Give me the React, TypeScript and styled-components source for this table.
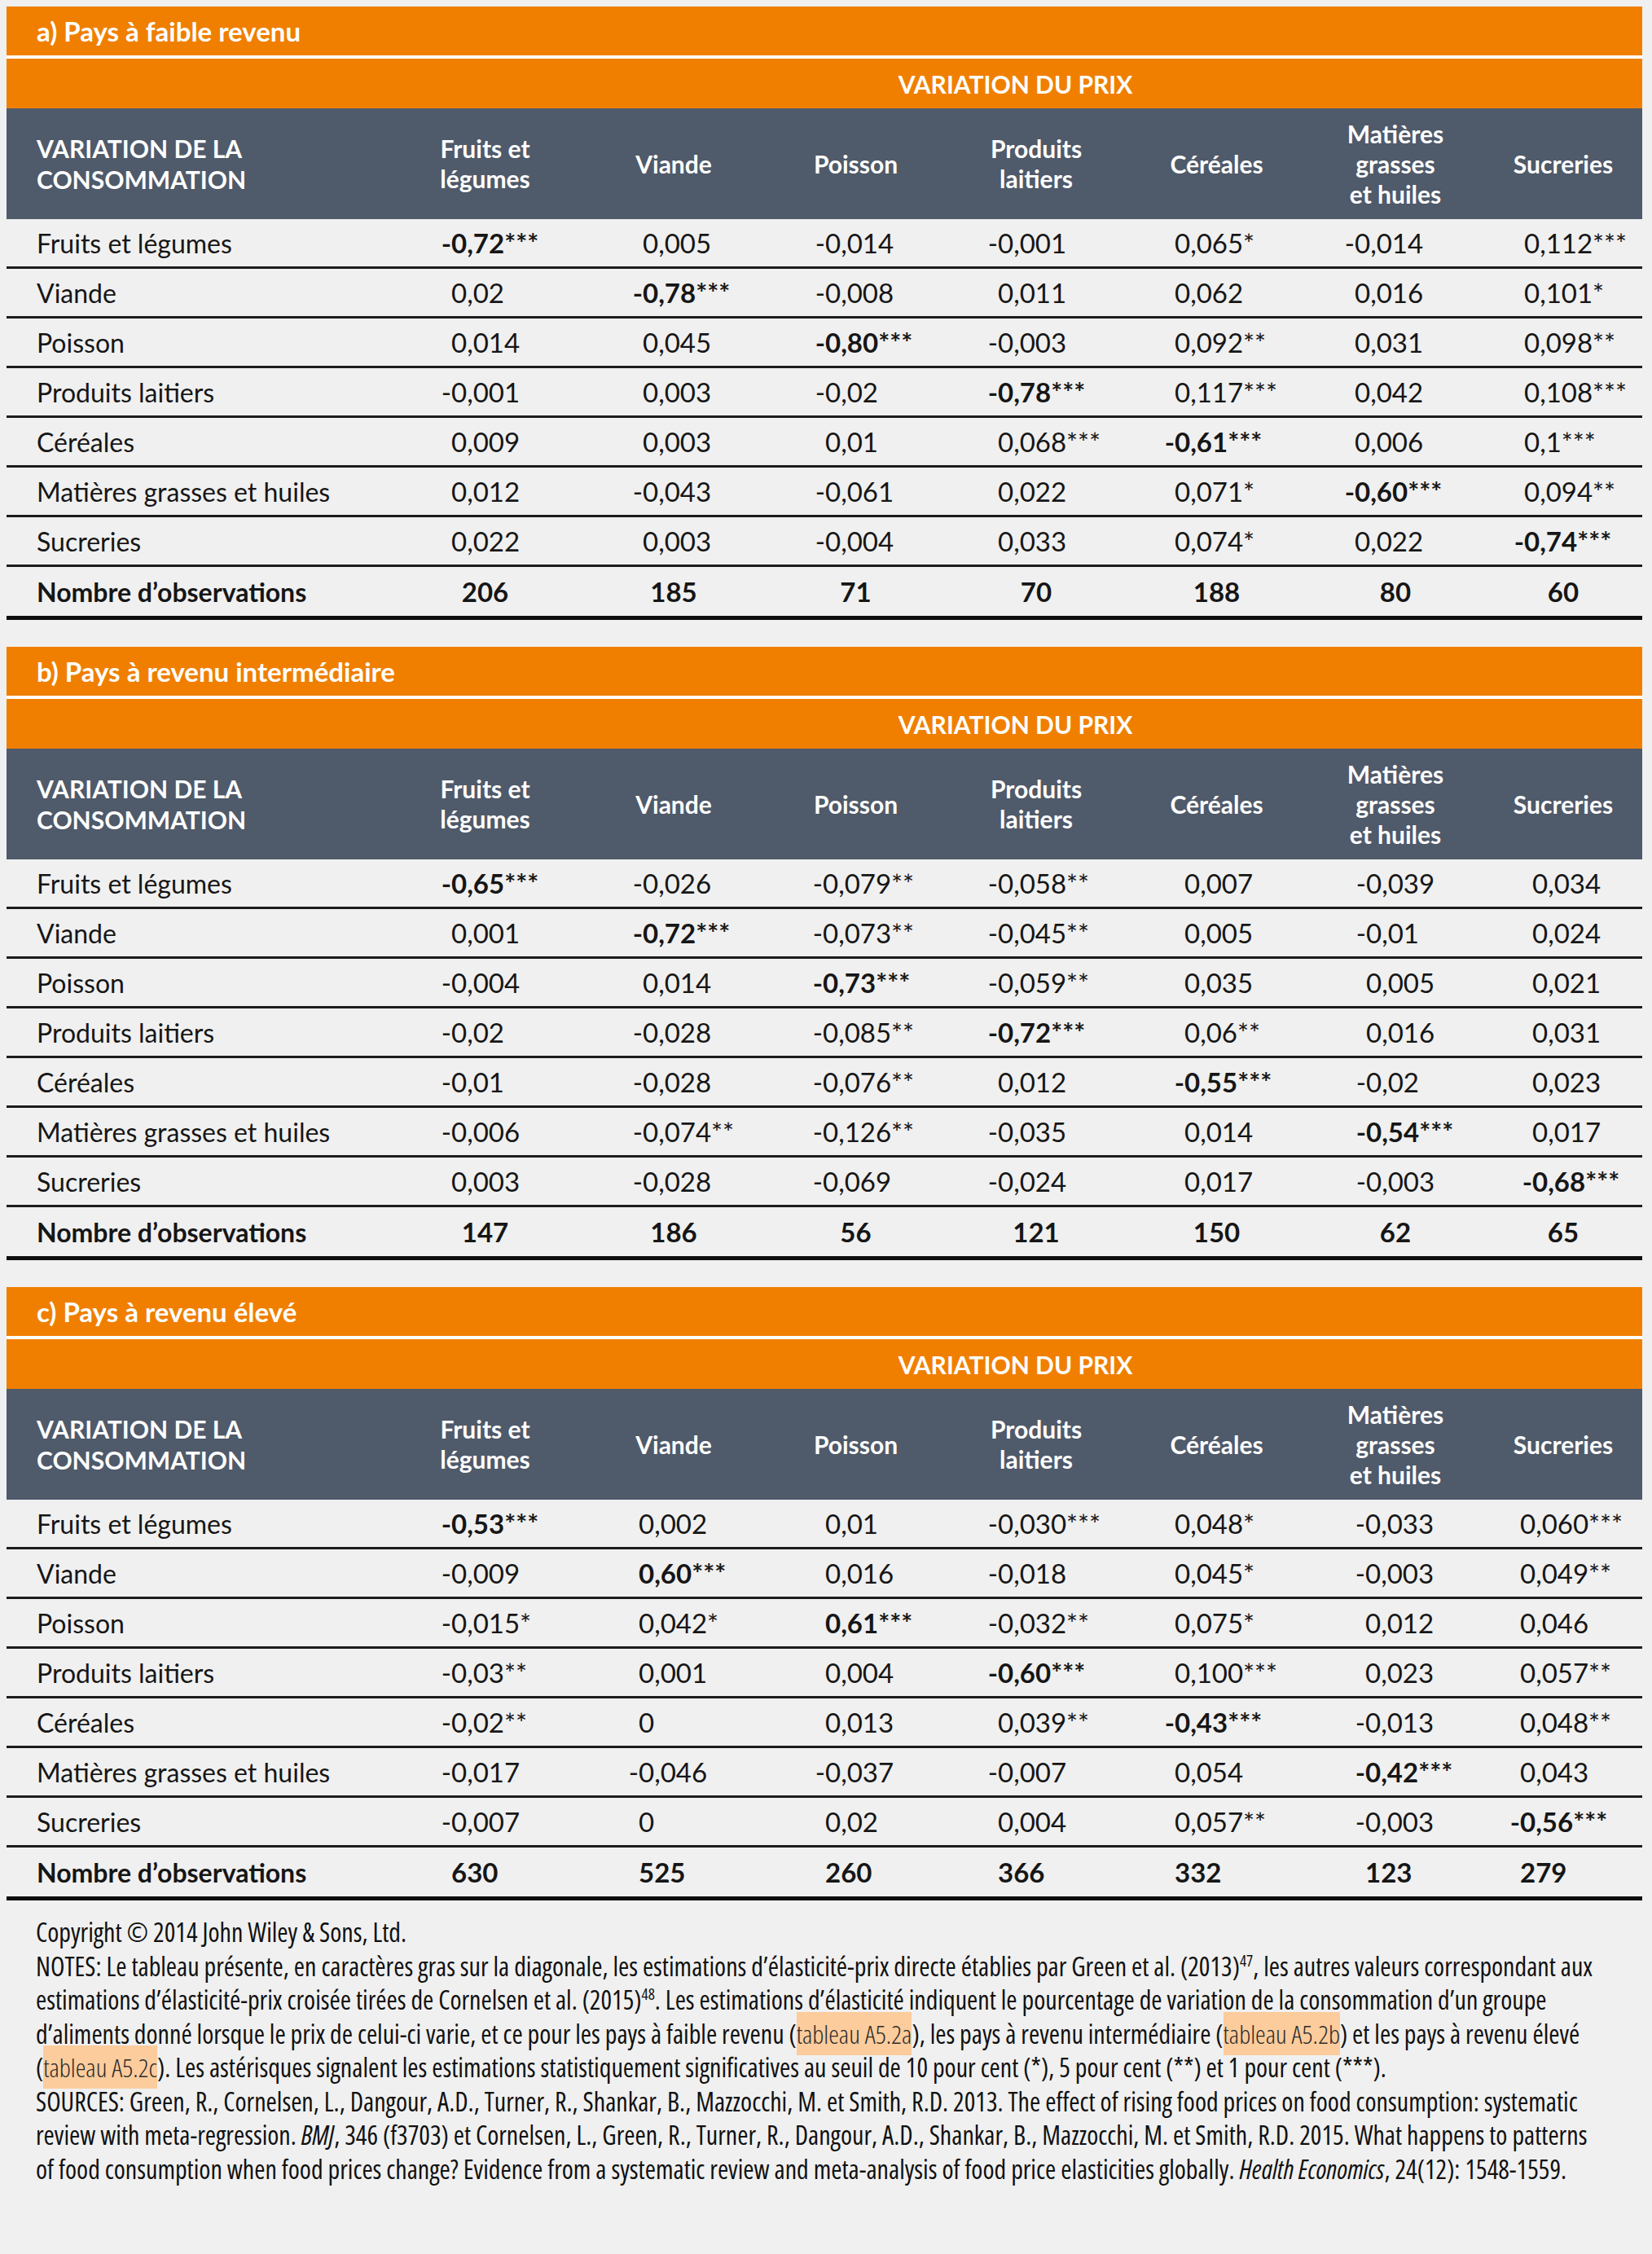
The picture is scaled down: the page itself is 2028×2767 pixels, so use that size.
import React from "react";
import styled, { createGlobalStyle, css } from "styled-components";

const ORANGE = "#f07f00";
const SLATE = "#4f5a6a";
const INK = "#161616";

const GlobalStyle = createGlobalStyle`
  html, body {
    margin: 0;
    padding: 0;
    background: #f0f0f0;
  }
  body {
    min-height: 2767px;
    font-family: "Lato", "Liberation Sans", sans-serif;
    color: ${INK};
  }
`;

const GRID = "469px 237px 226px 221px 222px 221px 218px 194px";

const Page = styled.div`
  width: 2028px;
  box-sizing: border-box;
  padding: 8px 12px 40px 8px;
  display: flex;
  flex-direction: column;
  gap: 18px;
`;

const TableStack = styled.div`
  display: flex;
  flex-direction: column;
  gap: 33px;
`;

const Section = styled.section`
  width: 2008px;
`;

const TitleBar = styled.div`
  height: 60px;
  background: ${ORANGE};
  color: #fff;
  display: flex;
  align-items: center;
  padding-left: 37px;
  font-family: "Lato", sans-serif;
  font-weight: 700;
  font-size: 33px;
`;

const PriceBar = styled.div`
  height: 61px;
  border-top: 4px solid #fff;
  background: ${ORANGE};
  color: #fff;
  display: grid;
  grid-template-columns: 469px 1fr;
  align-items: center;
  font-weight: 700;
  font-size: 30px;
`;

const PriceTitle = styled.div`
  grid-column: 2;
  text-align: center;
`;

const HeaderRow = styled.div`
  height: 136px;
  background: ${SLATE};
  color: #fff;
  display: grid;
  grid-template-columns: ${GRID};
  align-items: center;
  font-weight: 700;
  font-size: 30px;
`;

const HeaderLabel = styled.div`
  padding-left: 37px;
  line-height: 38px;
`;

const HeaderCell = styled.div`
  text-align: center;
  line-height: 37px;
`;

const DataRow = styled.div<{ $total?: boolean }>`
  display: grid;
  grid-template-columns: ${GRID};
  align-items: center;
  height: 58px;
  border-bottom: 3px solid #1c1c1c;
  ${(p) =>
    p.$total &&
    css`
      height: 60px;
      border-bottom: 5px solid #0e0e0e;
    `}
`;

const RowLabel = styled.div<{ $total?: boolean }>`
  padding-left: 37px;
  font-size: 32px;
  font-weight: ${(p) => (p.$total ? 700 : 400)};
  white-space: nowrap;
`;

const ValueCell = styled.div<{ $pad: number; $bold?: boolean; $center?: boolean }>`
  padding-left: ${(p) => (p.$center ? 0 : p.$pad)}px;
  text-align: ${(p) => (p.$center ? "center" : "left")};
  font-size: 33px;
  font-weight: ${(p) => (p.$bold ? 700 : 400)};
  white-space: nowrap;
`;

const Minus = styled.span`
  display: inline-block;
  width: 0;
  direction: rtl;
  white-space: nowrap;
`;

const Footer = styled.div`
  padding-left: 36px;
  font-family: "Open Sans", "Liberation Sans", sans-serif;
  font-stretch: 75%;
  font-size: 32px;
  line-height: 41.5px;
  color: #111;
`;

const NoteLine = styled.div`
  white-space: nowrap;
`;

const Hl = styled.span`
  background: #fccc9c;
  padding: 5px 0;
  font-weight: 300;
  color: #2b2b2b;
`;

const Sup = styled.sup`
  font-size: 0.6em;
  line-height: 0;
  vertical-align: 0.6em;
`;

type Cell = string;
type TableData = {
  title: string;
  pads: number[];
  countsCentered: boolean;
  rows: Cell[][];
  counts: string[];
};

const LABELS = [
  "Fruits et légumes",
  "Viande",
  "Poisson",
  "Produits laitiers",
  "Céréales",
  "Matières grasses et huiles",
  "Sucreries",
];

const HEADERS: string[][] = [
  ["Fruits et", "légumes"],
  ["Viande"],
  ["Poisson"],
  ["Produits", "laitiers"],
  ["Céréales"],
  ["Matières", "grasses", "et huiles"],
  ["Sucreries"],
];

const TABLES: TableData[] = [
  {
    title: "a) Pays à faible revenu",
    pads: [77, 75, 73, 64, 59, 59, 49],
    countsCentered: true,
    rows: [
      ["-0,72***", "0,005", "-0,014", "-0,001", "0,065*", "-0,014", "0,112***"],
      ["0,02", "-0,78***", "-0,008", "0,011", "0,062", "0,016", "0,101*"],
      ["0,014", "0,045", "-0,80***", "-0,003", "0,092**", "0,031", "0,098**"],
      ["-0,001", "0,003", "-0,02", "-0,78***", "0,117***", "0,042", "0,108***"],
      ["0,009", "0,003", "0,01", "0,068***", "-0,61***", "0,006", "0,1***"],
      ["0,012", "-0,043", "-0,061", "0,022", "0,071*", "-0,60***", "0,094**"],
      ["0,022", "0,003", "-0,004", "0,033", "0,074*", "0,022", "-0,74***"],
    ],
    counts: ["206", "185", "71", "70", "188", "80", "60"],
  },
  {
    title: "b) Pays à revenu intermédiaire",
    pads: [77, 75, 70, 64, 71, 73, 59],
    countsCentered: true,
    rows: [
      ["-0,65***", "-0,026", "-0,079**", "-0,058**", "0,007", "-0,039", "0,034"],
      ["0,001", "-0,72***", "-0,073**", "-0,045**", "0,005", "-0,01", "0,024"],
      ["-0,004", "0,014", "-0,73***", "-0,059**", "0,035", "0,005", "0,021"],
      ["-0,02", "-0,028", "-0,085**", "-0,72***", "0,06**", "0,016", "0,031"],
      ["-0,01", "-0,028", "-0,076**", "0,012", "-0,55***", "-0,02", "0,023"],
      ["-0,006", "-0,074**", "-0,126**", "-0,035", "0,014", "-0,54***", "0,017"],
      ["0,003", "-0,028", "-0,069", "-0,024", "0,017", "-0,003", "-0,68***"],
    ],
    counts: ["147", "186", "56", "121", "150", "62", "65"],
  },
  {
    title: "c) Pays à revenu élevé",
    pads: [77, 70, 73, 64, 59, 72, 44],
    countsCentered: false,
    rows: [
      ["-0,53***", "0,002", "0,01", "-0,030***", "0,048*", "-0,033", "0,060***"],
      ["-0,009", "0,60***", "0,016", "-0,018", "0,045*", "-0,003", "0,049**"],
      ["-0,015*", "0,042*", "0,61***", "-0,032**", "0,075*", "0,012", "0,046"],
      ["-0,03**", "0,001", "0,004", "-0,60***", "0,100***", "0,023", "0,057**"],
      ["-0,02**", "0", "0,013", "0,039**", "-0,43***", "-0,013", "0,048**"],
      ["-0,017", "-0,046", "-0,037", "-0,007", "0,054", "-0,42***", "0,043"],
      ["-0,007", "0", "0,02", "0,004", "0,057**", "-0,003", "-0,56***"],
    ],
    counts: ["630", "525", "260", "366", "332", "123", "279"],
  },
];

function Num({ v }: { v: string }) {
  if (v.startsWith("-")) {
    return (
      <>
        <Minus>-</Minus>
        {v.slice(1)}
      </>
    );
  }
  return <>{v}</>;
}

function Table({ t }: { t: TableData }) {
  return (
    <Section>
      <TitleBar>{t.title}</TitleBar>
      <PriceBar>
        <PriceTitle>VARIATION DU PRIX</PriceTitle>
      </PriceBar>
      <HeaderRow>
        <HeaderLabel>
          VARIATION DE LA
          <br />
          CONSOMMATION
        </HeaderLabel>
        {HEADERS.map((h, i) => (
          <HeaderCell key={i}>
            {h.map((l, j) => (
              <React.Fragment key={j}>
                {j > 0 && <br />}
                {l}
              </React.Fragment>
            ))}
          </HeaderCell>
        ))}
      </HeaderRow>
      {t.rows.map((r, ri) => (
        <DataRow key={ri}>
          <RowLabel>{LABELS[ri]}</RowLabel>
          {r.map((v, ci) => (
            <ValueCell key={ci} $pad={t.pads[ci]} $bold={ri === ci}>
              <Num v={v} />
            </ValueCell>
          ))}
        </DataRow>
      ))}
      <DataRow $total>
        <RowLabel $total>Nombre d’observations</RowLabel>
        {t.counts.map((c, ci) => (
          <ValueCell key={ci} $pad={t.pads[ci]} $bold $center={t.countsCentered}>
            {c}
          </ValueCell>
        ))}
      </DataRow>
    </Section>
  );
}

export default function App() {
  return (
    <>
      <GlobalStyle />
      <Page>
        <TableStack>
          {TABLES.map((t) => (
            <Table key={t.title} t={t} />
          ))}
        </TableStack>
        <Footer>
          <NoteLine>Copyright © 2014 John Wiley &amp; Sons, Ltd.</NoteLine>
          <NoteLine>
            NOTES: Le tableau présente, en caractères gras sur la diagonale, les estimations d’élasticité-prix directe
            établies par Green et al. (2013)<Sup>47</Sup>, les autres valeurs correspondant aux
          </NoteLine>
          <NoteLine>
            estimations d’élasticité-prix croisée tirées de Cornelsen et al. (2015)<Sup>48</Sup>. Les estimations
            d’élasticité indiquent le pourcentage de variation de la consommation d’un groupe
          </NoteLine>
          <NoteLine>
            d’aliments donné lorsque le prix de celui-ci varie, et ce pour les pays à faible revenu (
            <Hl>tableau A5.2a</Hl>), les pays à revenu intermédiaire (<Hl>tableau A5.2b</Hl>) et les pays à revenu
            élevé
          </NoteLine>
          <NoteLine>
            (<Hl>tableau A5.2c</Hl>). Les astérisques signalent les estimations statistiquement significatives au seuil
            de 10 pour cent (*), 5 pour cent (**) et 1 pour cent (***).
          </NoteLine>
          <NoteLine>
            SOURCES: Green, R., Cornelsen, L., Dangour, A.D., Turner, R., Shankar, B., Mazzocchi, M. et Smith, R.D.
            2013. The effect of rising food prices on food consumption: systematic
          </NoteLine>
          <NoteLine>
            review with meta-regression. <i>BMJ</i>, 346 (f3703) et Cornelsen, L., Green, R., Turner, R., Dangour,
            A.D., Shankar, B., Mazzocchi, M. et Smith, R.D. 2015. What happens to patterns
          </NoteLine>
          <NoteLine>
            of food consumption when food prices change? Evidence from a systematic review and meta-analysis of food
            price elasticities globally. <i>Health Economics</i>, 24(12): 1548-1559.
          </NoteLine>
        </Footer>
      </Page>
    </>
  );
}
